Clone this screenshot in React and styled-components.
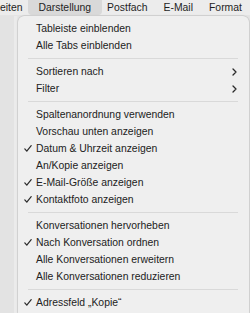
import React from "react";
import styled, { createGlobalStyle } from "styled-components";

const Global = createGlobalStyle`
  html, body { margin: 0; padding: 0; }
  body {
    background: #e4e4e4;
    width: 250px;
    height: 313px;
    overflow: hidden;
    font-family: "Liberation Sans", Arial, sans-serif;
    -webkit-font-smoothing: antialiased;
  }
`;

const Screen = styled.div`
  width: 250px;
  height: 313px;
  display: flex;
  flex-direction: column;
  overflow: hidden;
`;

const MenuBar = styled.div`
  height: 15px;
  flex: none;
  display: flex;
  align-items: stretch;
  background: #ececec;
  font-size: 10.4px;
  color: #1e1e1e;
  white-space: nowrap;
`;

const BarItem = styled.div`
  display: flex;
  align-items: center;
  padding: ${(p) => (p.$first ? "0 8px 0 0" : p.$active ? "0 11px" : "0 8px")};
  margin: ${(p) => (p.$active ? "0 -3px" : "0")};
  background: ${(p) => (p.$active ? "#d9d9d9" : "transparent")};
  border-radius: ${(p) => (p.$active ? "0 0 4px 4px" : "0")};
`;

const Body = styled.div`
  flex: 1;
  display: flex;
  padding-top: 1px;
`;

const Gutter = styled.div`
  width: 18px;
  flex: none;
  background: linear-gradient(to right, #e3e3e3 0, #e3e3e3 14px, #ebebeb 14px, #ebebeb 17px, #e6e6e6 17px);
`;

const Menu = styled.div`
  width: 231px;
  flex: none;
  background: #efefef;
  border-radius: 6px 6px 0 0;
  box-shadow: 0 0 0 0.5px rgba(0, 0, 0, 0.12), 0 0 3px rgba(0, 0, 0, 0.08);
  padding: 4px 0 0;
  font-size: 10.4px;
  color: #222;
`;

const Item = styled.div`
  height: 17px;
  display: flex;
  align-items: center;
  position: relative;
  padding: 0 12px 0 18px;
  white-space: nowrap;
`;

const Label = styled.span`
  flex: 1;
`;

const CheckMark = styled.svg`
  position: absolute;
  left: 6px;
  top: 5px;
  width: 8px;
  height: 7px;
`;

const Chevron = styled.svg`
  width: 5px;
  height: 8px;
  flex: none;
`;

const Separator = styled.div`
  height: 1px;
  margin: 4px 11px 4px 10px;
  background: #d9d9d9;
`;

const Check = () => (
  <CheckMark viewBox="0 0 8 7">
    <path d="M0.8 3.9 L2.8 6.2 L7.2 0.6" fill="none" stroke="#2a2a2a" strokeWidth="1.2" strokeLinecap="round" strokeLinejoin="round" />
  </CheckMark>
);

const Arrow = () => (
  <Chevron viewBox="0 0 5 8">
    <path d="M1 1 L4 4 L1 7" fill="none" stroke="#2a2a2a" strokeWidth="1.3" strokeLinecap="round" strokeLinejoin="round" />
  </Chevron>
);

const groups = [
  [{ t: "Tableiste einblenden" }, { t: "Alle Tabs einblenden" }],
  [{ t: "Sortieren nach", sub: true }, { t: "Filter", sub: true }],
  [
    { t: "Spaltenanordnung verwenden" },
    { t: "Vorschau unten anzeigen" },
    { t: "Datum & Uhrzeit anzeigen", c: true },
    { t: "An/Kopie anzeigen" },
    { t: "E-Mail-Größe anzeigen", c: true },
    { t: "Kontaktfoto anzeigen", c: true },
  ],
  [
    { t: "Konversationen hervorheben" },
    { t: "Nach Konversation ordnen", c: true },
    { t: "Alle Konversationen erweitern" },
    { t: "Alle Konversationen reduzieren" },
  ],
  [{ t: "Adressfeld „Kopie“", c: true }],
];

export default function App() {
  return (
    <>
      <Global />
      <Screen>
        <MenuBar>
          <BarItem $first>eiten</BarItem>
          <BarItem $active>Darstellung</BarItem>
          <BarItem>Postfach</BarItem>
          <BarItem>E-Mail</BarItem>
          <BarItem>Format</BarItem>
        </MenuBar>
        <Body>
          <Gutter />
          <Menu>
            {groups.map((g, gi) => (
              <React.Fragment key={gi}>
                {gi > 0 && <Separator />}
                {g.map((it) => (
                  <Item key={it.t}>
                    {it.c && <Check />}
                    <Label>{it.t}</Label>
                    {it.sub && <Arrow />}
                  </Item>
                ))}
              </React.Fragment>
            ))}
          </Menu>
        </Body>
      </Screen>
    </>
  );
}
